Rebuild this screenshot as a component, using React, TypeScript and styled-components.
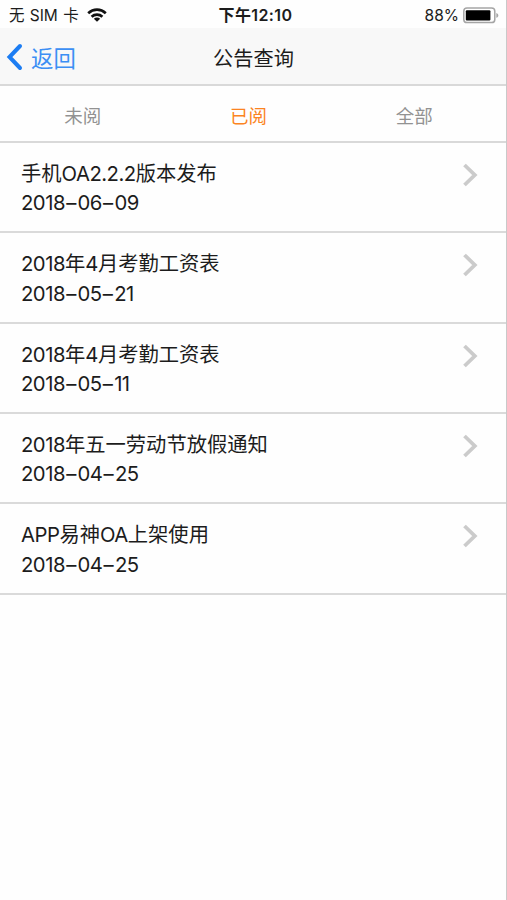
import React from "react";
import styled, { createGlobalStyle } from "styled-components";

const Global = createGlobalStyle`
  * { box-sizing: border-box; }
  body { margin: 0; background: #fff; font-family: Inter, "Noto Sans CJK SC", sans-serif; color: #1c1c1c; }
`;

const Screen = styled.div`
  width: 507px;
  height: 900px;
  overflow: hidden;
  background: #fefefe;
  border-right: 1px solid #c9c9c9;
`;

const StatusBar = styled.header`
  display: grid;
  grid-template-columns: 1fr auto 1fr;
  align-items: center;
  height: 28px;
  padding: 3px 7px 0 9px;
  font-size: 15.5px;
  line-height: 25px;
  white-space: nowrap;
`;

const Carrier = styled.div`
  display: flex;
  align-items: center;
  gap: 8px;
  word-spacing: 0.9px;
`;

const Clock = styled.div`
  padding-left: 3px;
  font-size: 16px;
  font-weight: 600;
  letter-spacing: 0.4px;
`;

const Power = styled.div`
  display: flex;
  align-items: center;
  justify-content: flex-end;
  gap: 4px;
`;

const NavBar = styled.nav`
  display: grid;
  grid-template-columns: 1fr auto 1fr;
  align-items: center;
  height: 58px;
  padding: 5px 0 0 6px;
  background: #f8f8f8;
  border-bottom: 2px solid #d9d9d9;
`;

const Back = styled.div`
  display: flex;
  align-items: center;
  gap: 8px;
  color: #3c8ff4;
  font-size: 22.4px;
  line-height: 32px;
`;

const BackArrow = styled.svg`
  flex: none;
  margin-top: -4px;
`;

const Heading = styled.h1`
  margin: 0 0 0 -5px;
  padding-top: 1px;
  font-size: 20.2px;
  line-height: 30px;
  font-weight: 400;
`;

const Tabs = styled.div`
  display: grid;
  grid-template-columns: repeat(3, 165.7px);
  height: 57px;
  padding-top: 2px;
  border-bottom: 2px solid #d9d9d9;
`;

const Tab = styled.div<{ $active?: boolean }>`
  display: flex;
  align-items: center;
  justify-content: center;
  font-size: 18.5px;
  color: ${(p) => (p.$active ? "#fb8422" : "#929292")};
`;

const Row = styled.article`
  display: flex;
  justify-content: space-between;
  height: 90.35px;
  padding: 16px 28px 0 21px;
  border-bottom: 2px solid #dadada;
`;

const Line = styled.div`
  font-size: 20.3px;
  line-height: 29.2px;
  white-space: nowrap;
`;

const Latin = styled.span`
  letter-spacing: -0.5px;
`;

const Dash = styled.span`
  margin: 0 1.2px;
`;

const Arrow = styled.svg`
  flex: none;
  margin-top: 3px;
`;

const notices = [
  { title: "手机OA2.2.2版本发布", date: "2018–06–09" },
  { title: "2018年4月考勤工资表", date: "2018–05–21" },
  { title: "2018年4月考勤工资表", date: "2018–05–11" },
  { title: "2018年五一劳动节放假通知", date: "2018–04–25" },
  { title: "APP易神OA上架使用", date: "2018–04–25" },
];

function Mixed({ text }: { text: string }) {
  return (
    <>
      {text.split(/([A-Z0-9.]+|–)/).map((part, i) => {
        if (part === "–") return <Dash key={i}>–</Dash>;
        return i % 2 ? <Latin key={i}>{part}</Latin> : part;
      })}
    </>
  );
}

function Wifi() {
  return (
    <svg width="20" height="15" viewBox="0 0 20 15" fill="none" stroke="#111" strokeWidth="2.7">
      <path d="M1.2 5.2C6.3.5 13.7.5 18.8 5.2" />
      <path d="M4.6 8.8C7.7 6 12.3 6 15.4 8.8" />
      <path d="M10 13.8 6.8 10.7c1.8-1.6 4.6-1.6 6.4 0z" fill="#111" stroke="none" />
    </svg>
  );
}

function Battery() {
  return (
    <svg width="36" height="17" viewBox="0 0 36 17">
      <rect x=".8" y="1" width="31" height="14.6" rx="3.2" fill="#fff" stroke="#a5a5a5" strokeWidth="1.5" />
      <rect x="2.8" y="3.2" width="24.6" height="10.4" rx="1" fill="#000" />
      <path d="M33.3 6v4.8c2.7-.8 2.7-4 0-4.8z" fill="#a5a5a5" />
    </svg>
  );
}

export default function App() {
  return (
    <Screen>
      <Global />
      <StatusBar>
        <Carrier>无 SIM 卡<Wifi /></Carrier>
        <Clock>下午12:10</Clock>
        <Power>88%<Battery /></Power>
      </StatusBar>
      <NavBar>
        <Back>
          <BackArrow width="17" height="28" viewBox="0 0 17 28" fill="none" stroke="#1c7df3" strokeWidth="4" strokeLinecap="round">
            <path d="M14 3 3.5 14 14 25" />
          </BackArrow>
          返回
        </Back>
        <Heading>公告查询</Heading>
        <span />
      </NavBar>
      <Tabs>
        <Tab>未阅</Tab>
        <Tab $active>已阅</Tab>
        <Tab>全部</Tab>
      </Tabs>
      {notices.map((n, i) => (
        <Row key={i}>
          <div>
            <Line><Mixed text={n.title} /></Line>
            <Line><Mixed text={n.date} /></Line>
          </div>
          <Arrow width="16" height="26" viewBox="0 0 16 26" fill="none" stroke="#cbcbcb" strokeWidth="3.8">
            <path d="M2.5 3 12.8 13 2.5 23" />
          </Arrow>
        </Row>
      ))}
    </Screen>
  );
}
